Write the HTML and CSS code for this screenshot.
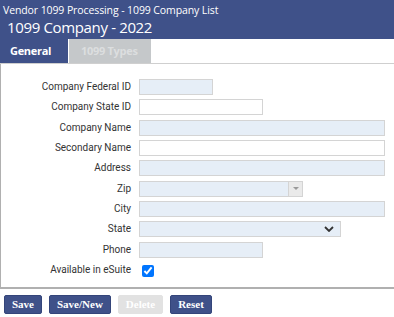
FILE: index.html
```html
<!DOCTYPE html>
<html lang="en">
<head>
    <meta charset="UTF-8">
    <title>1099 Company - 2022</title>
    <link rel="stylesheet" href="styles.css">
</head>
<body>
    <div class="page-header">
        <div class="crumb">Vendor 1099 Processing - 1099 Company List</div>
        <h1>1099 Company - 2022</h1>
    </div>
    <div class="tabs">
        <div class="tab active">General</div>
        <div class="tab disabled">1099 Types</div>
    </div>
    <div class="panel">
        <form class="company-form">
            <label for="fedId">Company Federal ID</label>
            <div><input id="fedId" class="ro w-short" type="text"></div>

            <label for="stateId">Company State ID</label>
            <div><input id="stateId" class="w-mid" type="text"></div>

            <label for="name">Company Name</label>
            <div><input id="name" class="ro w-full" type="text"></div>

            <label for="name2">Secondary Name</label>
            <div><input id="name2" class="w-full" type="text"></div>

            <label for="address">Address</label>
            <div><input id="address" class="ro w-full" type="text"></div>

            <label for="zip">Zip</label>
            <div class="combo">
                <input id="zip" class="ro" type="text">
                <span class="combo-btn"><span class="tri"></span></span>
            </div>

            <label for="city">City</label>
            <div><input id="city" class="ro w-full" type="text"></div>

            <label for="state">State</label>
            <div class="select">
                <span id="state"></span>
                <svg width="10" height="6" viewBox="0 0 10 6"><path d="M1 1 L5 5 L9 1" fill="none" stroke="#333" stroke-width="1.8"/></svg>
            </div>

            <label for="phone">Phone</label>
            <div><input id="phone" class="ro w-mid" type="text"></div>

            <label for="esuite">Available in eSuite</label>
            <div><input id="esuite" class="check" type="checkbox" checked></div>
        </form>
    </div>
    <div class="actions">
        <button class="btn">Save</button>
        <button class="btn">Save/New</button>
        <button class="btn off">Delete</button>
        <button class="btn">Reset</button>
    </div>
</body>
</html>
```

FILE: styles.css
```css
body {
    margin: 0;
    font-family: Roboto, "Liberation Sans", sans-serif;
    background: #fff;
}
.page-header {
    background: #3f5189;
    color: #fff;
    padding: 4px 0 0 3px;
    height: 35px;
    font-family: "Open Sans", sans-serif;
}
.crumb {
    font-size: 10.5px;
    line-height: 13px;
    letter-spacing: -0.1px;
}
.page-header h1 {
    margin: 0 0 0 4px;
    font-size: 15px;
    font-weight: normal;
    line-height: 20px;
    letter-spacing: -0.35px;
}
.tabs {
    display: flex;
    height: 24px;
    border-bottom: 1px solid #cfcfcf;
}
.tab {
    font-family: "Open Sans", sans-serif;
    font-size: 11px;
    font-weight: bold;
    line-height: 24px;
    letter-spacing: -0.3px;
}
.tab.active {
    background: #3f5189;
    color: #fff;
    width: 58px;
    padding-left: 10px;
}
.tab.disabled {
    background: #c5c8ca;
    color: #dcdedf;
    margin-left: 1px;
    width: 70px;
    padding-left: 12px;
}
.panel {
    border-left: 1px solid #b0b0b0;
    border-bottom: 2px solid #b0b0b0;
    padding: 15px 0 9px 0;
}
.company-form {
    display: grid;
    grid-template-columns: 130px 1fr;
    grid-auto-rows: 16px;
    column-gap: 8px;
    row-gap: 4.33px;
}
.company-form label {
    text-align: right;
    font-size: 10px;
    line-height: 16px;
    color: #333;
}
.company-form input[type="text"] {
    box-sizing: border-box;
    height: 16px;
    margin: 0;
    padding: 0 3px;
    border: 1px solid #d4d4d4;
    background: #fff;
    display: block;
}
.company-form input.ro {
    background: #e6eef7;
}
.w-short { width: 74px; }
.w-mid { width: 124px; }
.w-full { width: 246px; }
.combo {
    display: flex;
    width: 164px;
}
.combo input[type="text"] {
    width: 149px;
    border-right: none;
}
.combo-btn {
    box-sizing: border-box;
    width: 15px;
    height: 16px;
    border: 1px solid #d4d4d4;
    background: #eaeaea;
    display: flex;
    align-items: center;
    justify-content: center;
}
.tri {
    border-left: 3px solid transparent;
    border-right: 3px solid transparent;
    border-top: 3px solid #9a9a9a;
}
.select {
    box-sizing: border-box;
    width: 202px;
    height: 16px;
    border: 1px solid #d4d4d4;
    background: #e6eef7;
    display: flex;
    align-items: center;
    justify-content: flex-end;
    padding-right: 6px;
}
.check {
    margin: 2px 0 0 3px;
    width: 12px;
    height: 12px;
}
.actions {
    display: flex;
    gap: 7px;
    padding: 6px 0 0 4px;
}
.btn {
    font-family: "Liberation Serif", serif;
    font-weight: bold;
    font-size: 11px;
    height: 19px;
    padding: 0 7px;
    border: 1px solid #34457a;
    border-radius: 2px;
    background: #3f5189;
    color: #fff;
}
.btn.off {
    background: #e2e2e2;
    border-color: #e2e2e2;
    color: #fff;
}
```
